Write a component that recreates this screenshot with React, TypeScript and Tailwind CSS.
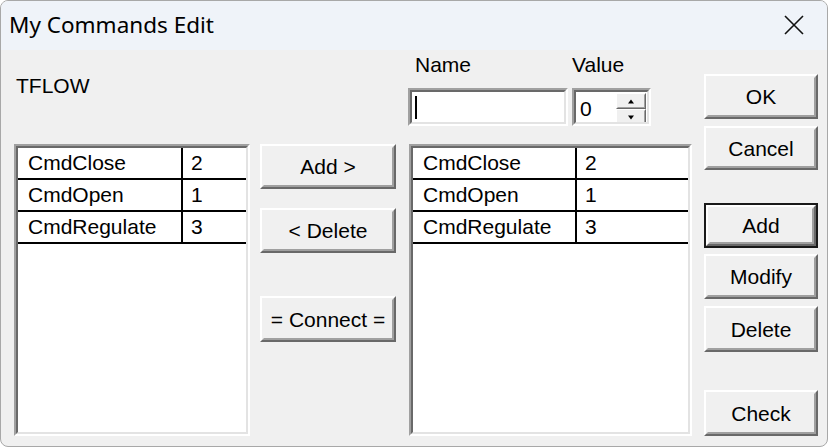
import React from "react";

const font = { fontFamily: '"Liberation Sans", Arial, sans-serif' };

function Raised({ children, className = "", isDefault = false }: { children: React.ReactNode; className?: string; isDefault?: boolean }) {
  const inner = (
    <div className="flex-1 flex border-2 border-t-white border-l-white border-b-[#696969] border-r-[#696969]">
      <div className="flex-1 flex items-center justify-center border-2 border-t-[#f0f0f0] border-l-[#f0f0f0] border-b-[#a0a0a0] border-r-[#a0a0a0] text-[21px] text-black leading-none">
        {children}
      </div>
    </div>
  );
  if (isDefault) {
    return <div className={`flex border-2 border-[#1a1a1a] ${className}`}>{inner}</div>;
  }
  return <div className={`flex ${className}`}>{inner}</div>;
}

function Sunken({ children, className = "" }: { children?: React.ReactNode; className?: string }) {
  return (
    <div className={`flex border-2 border-t-[#a0a0a0] border-l-[#a0a0a0] border-b-white border-r-white ${className}`}>
      <div className="flex-1 flex flex-col border-2 border-t-[#696969] border-l-[#696969] border-b-[#e3e3e3] border-r-[#e3e3e3] bg-white overflow-hidden">
        {children}
      </div>
    </div>
  );
}

const rows = [
  ["CmdClose", "2"],
  ["CmdOpen", "1"],
  ["CmdRegulate", "3"],
];

function ListBox({ className, col1 }: { className: string; col1: string }) {
  return (
    <Sunken className={className}>
      {rows.map(([n, v]) => (
        <div key={n} className="flex h-[32px] border-b-2 border-black text-[21px] leading-[30px] text-black">
          <div className={`${col1} border-r-2 border-black pl-[10px]`}>{n}</div>
          <div className="flex-1 pl-[8px]">{v}</div>
        </div>
      ))}
    </Sunken>
  );
}

function SpinBtn({ up }: { up: boolean }) {
  return (
    <div className="flex-1 flex border border-t-white border-l-white border-b-[#696969] border-r-[#696969]">
      <div className="flex-1 flex items-center justify-center border border-t-[#f0f0f0] border-l-[#f0f0f0] border-b-[#a0a0a0] border-r-[#a0a0a0] bg-[#f0f0f0]">
        <svg width="8" height="5" viewBox="0 0 8 5">
          {up ? <polygon points="4,0.5 7,4.5 1,4.5" fill="#000" /> : <polygon points="1,0.5 7,0.5 4,4.5" fill="#000" />}
        </svg>
      </div>
    </div>
  );
}

export default function App() {
  return (
    <div className="w-[830px] h-[448px] bg-white" style={font}>
      <div className="w-[828px] h-[447px] border border-[#a8a8a8] rounded-[8px] overflow-hidden bg-[#f0f0f0] flex flex-col">
        {/* Title bar */}
        <div className="h-[49px] bg-[#eff3f9] flex items-center justify-between pl-[8px] pr-[22px] shrink-0">
          <span className="text-[22.5px] text-black leading-none -mt-[1px]" style={{ fontFamily: '"Noto Sans", "Open Sans", sans-serif' }}>
            My Commands Edit
          </span>
          <svg width="22" height="22" viewBox="0 0 22 22" className="-mt-[1px]">
            <path d="M2 2 L20 20 M20 2 L2 20" stroke="#111" strokeWidth="1.6" fill="none" />
          </svg>
        </div>
        {/* Body */}
        <div className="flex flex-1">
          {/* Left column */}
          <div className="ml-[13px] w-[236px] flex flex-col">
            <div className="mt-[24px] h-[24px] pl-[2px] text-[21px] leading-[24px] text-black">TFLOW</div>
            <ListBox className="mt-[46px] h-[292px]" col1="w-[165px]" />
          </div>
          {/* Middle buttons */}
          <div className="ml-[10px] w-[136px] flex flex-col">
            <Raised className="mt-[94px] h-[45px]">Add &gt;</Raised>
            <Raised className="mt-[19px] h-[45px]">&lt; Delete</Raised>
            <Raised className="mt-[43px] h-[46px]">= Connect =</Raised>
          </div>
          {/* Right list column */}
          <div className="ml-[13px] w-[283px] flex flex-col">
            <div className="mt-[3px] h-[24px] flex text-[21px] leading-[24px] text-black">
              <div className="w-[163px] pl-[6px]">Name</div>
              <div className="pl-[0px]">Value</div>
            </div>
            <div className="mt-[11px] h-[38px] flex">
              <Sunken className="w-[160px] -ml-[1px]">
                <div className="flex-1 flex items-center pl-[3px]">
                  <div className="w-[2px] h-[23px] bg-black" />
                </div>
              </Sunken>
              <Sunken className="ml-[4px] w-[79px]">
                <div className="flex-1 flex items-stretch">
                  <div className="flex-1 pl-[4px] text-[21px] leading-[34px] text-black">0</div>
                  <div className="w-[31px] flex flex-col py-[1px] pr-[1px] bg-white">
                    <SpinBtn up />
                    <SpinBtn up={false} />
                  </div>
                </div>
              </Sunken>
            </div>
            <ListBox className="mt-[18px] h-[292px]" col1="w-[164px]" />
          </div>
          {/* Right buttons */}
          <div className="ml-[12px] w-[114px] flex flex-col">
            <Raised className="mt-[24px] h-[45px]">OK</Raised>
            <Raised className="mt-[7px] h-[44px]">Cancel</Raised>
            <Raised className="mt-[33px] h-[45px]" isDefault>Add</Raised>
            <Raised className="mt-[6px] h-[45px]">Modify</Raised>
            <Raised className="mt-[7px] h-[46px]">Delete</Raised>
            <Raised className="mt-[38px] h-[46px]">Check</Raised>
          </div>
        </div>
      </div>
    </div>
  );
}
